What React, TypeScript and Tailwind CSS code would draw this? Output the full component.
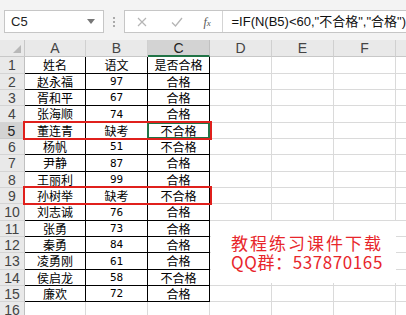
import React from "react";

const rows: [string, string, string][] = [
  ["姓名", "语文", "是否合格"],
  ["赵永福", "97", "合格"],
  ["胥和平", "67", "合格"],
  ["张海顺", "74", "合格"],
  ["董连青", "缺考", "不合格"],
  ["杨帆", "51", "不合格"],
  ["尹静", "87", "合格"],
  ["王丽利", "99", "合格"],
  ["孙树举", "缺考", "不合格"],
  ["刘志诚", "76", "合格"],
  ["张勇", "73", "合格"],
  ["秦勇", "84", "合格"],
  ["凌勇刚", "61", "合格"],
  ["侯启龙", "58", "不合格"],
  ["廉欢", "72", "合格"],
];

const heights = [17, 16, 16, 17, 16, 16, 17, 16, 16, 17, 16, 16, 17, 16, 16, 17];
const hClass: Record<number, string> = { 16: "h-[16px]", 17: "h-[17px]" };

const cjk = { fontFamily: '"Noto Sans CJK SC", sans-serif' };
const hdrFont = { fontFamily: '"Liberation Sans", Arial, sans-serif' };

function Cell({ text, black, selected }: { text: string; black: boolean; selected?: boolean }) {
  const isNum = /^\d+$/.test(text);
  return (
    <div
      className={
        "relative flex items-center justify-center border-b border-r text-[12px] leading-none text-black " +
        (black ? "border-b-black border-r-black " : "border-b-[#dadada] border-r-[#dadada] ")
      }
      style={isNum ? { fontFamily: '"DejaVu Sans Mono", monospace', fontSize: "11px" } : cjk}
    >
      {text}
      {selected && <div className="absolute -left-px -top-px -right-px -bottom-px border-2 border-[#217346]" />}
    </div>
  );
}

export default function App() {
  return (
    <div className="relative h-[315px] w-[406px] overflow-hidden bg-white">
      {/* formula bar */}
      <div className="flex h-[40px] items-start bg-[#f3f3f3] pt-[10px]">
        <div className="ml-[4px] flex h-[23px] w-[104px] items-center justify-between border border-[#c6c6c6] bg-white pl-[6px] pr-[8px]">
          <span className="text-[13px] text-[#222]" style={hdrFont}>C5</span>
          <svg width="8" height="5" viewBox="0 0 8 5"><path d="M0 0H8L4 5Z" fill="#777" /></svg>
        </div>
        <div className="flex h-[23px] w-[21px] flex-col items-center justify-center gap-[2px]">
          <div className="h-[2px] w-[2px] bg-[#aaa]" />
          <div className="h-[2px] w-[2px] bg-[#aaa]" />
          <div className="h-[2px] w-[2px] bg-[#aaa]" />
        </div>
        <div className="flex h-[23px] flex-1 items-center border border-r-0 border-[#c6c6c6] bg-white">
          <div className="flex w-[97px] items-center">
            <svg className="ml-[12px]" width="10" height="10" viewBox="0 0 10 10"><path d="M1 1L9 9M9 1L1 9" stroke="#b5b5b5" strokeWidth="1.2" /></svg>
            <svg className="ml-[24px]" width="12" height="10" viewBox="0 0 12 10"><path d="M1 5.5L4.5 9L11 1" stroke="#b5b5b5" strokeWidth="1.3" fill="none" /></svg>
            <span className="ml-[21px] text-[12px] italic text-[#555]" style={{ fontFamily: '"Liberation Serif", serif' }}>f<span className="text-[9px]">x</span></span>
          </div>
          <div className="h-full border-l border-[#d4d4d4]" />
          <span className="ml-[9px] whitespace-nowrap text-[13px] text-[#111]" style={{ fontFamily: '"Liberation Sans", "Noto Sans CJK SC", sans-serif' }}>
            =IF(N(B5)&lt;60,"不合格","合格")
          </span>
        </div>
      </div>

      {/* sheet */}
      <div className="relative">
        {/* column header */}
        <div className="grid h-[17px] grid-cols-[25px_61px_62px_62px_62px_62px_62px_62px] bg-[#e9e9e9]" style={hdrFont}>
          <div className="relative border-b border-r border-[#c8c8c8]">
            <svg className="absolute bottom-[3px] right-[3px]" width="8" height="8" viewBox="0 0 8 8"><path d="M8 0V8H0Z" fill="#b8b8b8" /></svg>
          </div>
          {["A", "B", "C", "D", "E", "F", ""].map((c) => (
            <div
              key={c}
              className={
                "flex items-center justify-center border-r text-[14px] leading-none " +
                (c === "C"
                  ? "border-b-2 border-b-[#217346] border-r-[#c0c0c0] bg-[#d3d3d3] text-[#222]"
                  : "border-b border-b-[#c8c8c8] border-r-[#d0d0d0] text-[#444]")
              }
            >
              {c}
            </div>
          ))}
        </div>
        {heights.map((h, i) => {
          const r = rows[i];
          const rowNo = i + 1;
          return (
            <div key={i} className={"grid grid-cols-[25px_61px_62px_62px_62px_62px_62px_62px] " + hClass[h]}>
              <div
                className={
                  "flex items-center justify-center border-b text-[14px] leading-none " +
                  (rowNo === 5
                    ? "border-r-2 border-r-[#217346] border-b-[#c8c8c8] bg-[#d3d3d3] text-[#222]"
                    : "border-r border-r-[#c0c0c0] border-b-[#d4d4d4] bg-[#e9e9e9] text-[#444]")
                }
                style={hdrFont}
              >
                {rowNo}
              </div>
              {[0, 1, 2].map((c) => (
                <Cell key={c} text={r ? r[c] : ""} black={!!r} selected={rowNo === 5 && c === 2} />
              ))}
              {[0, 1, 2, 3].map((c) => (
                <div key={"e" + c} className="border-b border-r border-[#dadada]" />
              ))}
            </div>
          );
        })}

        {/* red highlight boxes */}
        <div className="absolute left-[23px] top-[81px] h-[19px] w-[189px] border-2 border-[#e0201c]" />
        <div className="absolute left-[23px] top-[146px] h-[19px] w-[189px] border-2 border-[#e0201c]" />

        {/* watermark */}
        <div
          className="absolute left-[211px] top-[181px] flex h-[62px] w-[185px] flex-col justify-center gap-[2px] bg-white pl-[20px] text-[17px] leading-none text-[#e8262b]"
          style={{ fontFamily: '"Noto Sans CJK SC", sans-serif' }}
        >
          <span className="whitespace-nowrap tracking-[2px]">教程练习课件下载</span>
          <span className="whitespace-nowrap tracking-[0.6px]">QQ群：537870165</span>
        </div>
      </div>
    </div>
  );
}
